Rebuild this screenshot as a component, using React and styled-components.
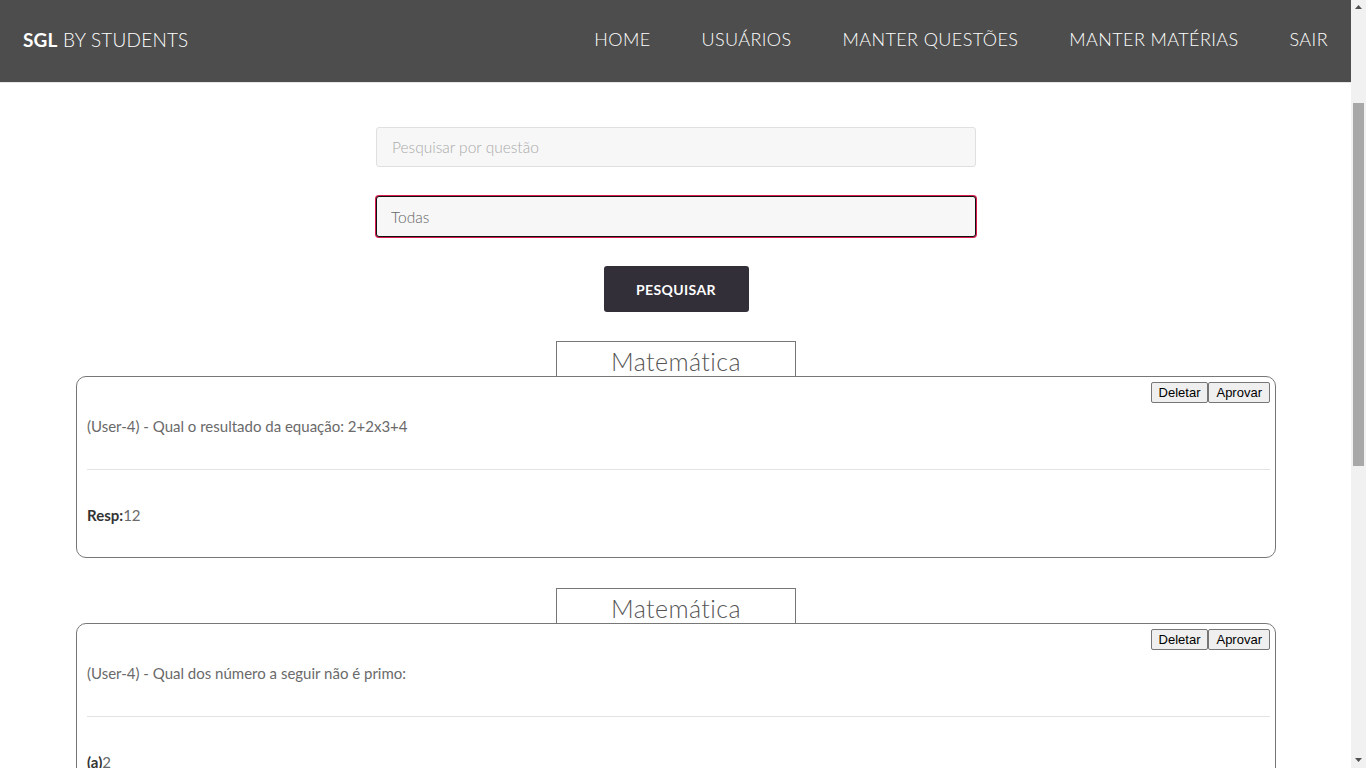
import React from "react";
import styled, { createGlobalStyle } from "styled-components";

const Global = createGlobalStyle`
  html, body { margin: 0; padding: 0; background: #fff; }
  body { font-family: "Lato", "Open Sans", sans-serif; color: #666; }
  * { box-sizing: border-box; }
`;

const Page = styled.div`
  margin-right: 15px;
`;

const ScrollTrack = styled.div`
  position: fixed;
  top: 0;
  right: 0;
  width: 15px;
  height: 100vh;
  background: #f1f1f1;
  display: flex;
  flex-direction: column;
  align-items: center;
  justify-content: space-between;
  padding: 5px 0 6px;
`;

const ScrollThumb = styled.div`
  position: absolute;
  left: 2px;
  top: 103px;
  width: 11px;
  height: 363px;
  background: #a8a8a8;
`;

const Arrow = styled.svg`
  display: block;
  width: 7px;
  height: 4px;
  fill: #505050;
`;

const Nav = styled.header`
  height: 83px;
  background: #4d4d4d;
  display: flex;
  align-items: center;
  justify-content: space-between;
  padding: 0 23px 4px 23px;
  border-bottom: 1px solid #e6e6e6;
`;

const Brand = styled.div`
  color: #fff;
  font-size: 19px;
  font-weight: 300;
  letter-spacing: 0.2px;
  b { font-weight: 700; }
`;

const Menu = styled.nav`
  display: flex;
  gap: 51px;
`;

const MenuLink = styled.a`
  color: #fff;
  font-size: 18px;
  font-weight: 300;
  letter-spacing: 0.4px;
  text-transform: uppercase;
  text-decoration: none;
`;

const Main = styled.main`
  display: flex;
  flex-direction: column;
  align-items: center;
  padding: 44px 75px 40px 76px;
`;

const SearchInput = styled.input`
  width: 600px;
  height: 40px;
  background: #f7f7f7;
  border: 1px solid #e0e0e0;
  border-radius: 3px;
  padding: 0 15px;
  font-family: inherit;
  font-size: 15.5px;
  font-weight: 300;
  color: #555;
  outline: none;
  &::placeholder { color: #aaa; }
`;

const Select = styled.select`
  appearance: none;
  margin-top: 29px;
  width: 600px;
  height: 41px;
  background: #f7f7f7;
  border: 1px solid #111;
  box-shadow: 0 0 0 1px #d81b4c;
  border-radius: 3px;
  padding: 0 14px;
  font-family: inherit;
  font-size: 15.5px;
  font-weight: 300;
  color: #666;
  outline: none;
`;

const SearchButton = styled.button`
  margin-top: 29px;
  width: 145px;
  height: 46px;
  background: #332f38;
  color: #fff;
  border: none;
  border-radius: 3px;
  font-family: inherit;
  font-weight: 700;
  font-size: 14px;
  letter-spacing: 0.4px;
`;

const Question = styled.section`
  width: 100%;
  display: flex;
  flex-direction: column;
  align-items: center;
  margin-top: ${(p) => (p.$first ? "29px" : "30px")};
`;

const SubjectTab = styled.div`
  width: 240px;
  height: 35px;
  border: 1px solid #777;
  border-bottom: none;
  text-align: center;
  font-size: 25px;
  font-weight: 300;
  color: #555;
  line-height: 38px;
  letter-spacing: 0.4px;
`;

const Card = styled.div`
  width: 1200px;
  border: 1px solid #777;
  border-radius: 10px;
  padding: 5px 5px 32px 10px;
`;

const Actions = styled.div`
  display: flex;
  justify-content: flex-end;
`;

const SmallButton = styled.button`
  font-family: "Liberation Sans", Arial, sans-serif;
  font-size: 13px;
  height: 21px;
  padding: 0 7px;
  margin: 0;
  background: #efefef;
  color: #000;
  border: 1px solid #767676;
  border-radius: 2px;
`;

const QuestionText = styled.p`
  margin: 13px 0 0 0;
  font-size: 15px;
  font-weight: 400;
  line-height: 20px;
  color: #6a6a6a;
`;

const Divider = styled.hr`
  margin: 33px 0 0 0;
  border: none;
  border-top: 1px solid #e3e3e3;
`;

const Line = styled.p`
  margin: ${(p) => (p.$tight ? "14px" : "35px")} 0 0 0;
  font-size: 15px;
  line-height: 20px;
  color: #6a6a6a;
  b { color: #333; font-weight: 700; }
`;

const questions = [
  {
    subject: "Matemática",
    text: "(User-4) - Qual o resultado da equação: 2+2x3+4",
    lines: [["Resp:", "12"]],
  },
  {
    subject: "Matemática",
    text: "(User-4) - Qual dos número a seguir não é primo:",
    lines: [
      ["(a)", "2"],
      ["(b)", "3"],
      ["(c)", "4"],
      ["(d)", "5"],
      ["Resp:", "4"],
    ],
  },
];

export default function App() {
  return (
    <>
      <Global />
      <Page>
        <Nav>
          <Brand>
            <b>SGL</b> BY STUDENTS
          </Brand>
          <Menu>
            <MenuLink href="#">Home</MenuLink>
            <MenuLink href="#">Usuários</MenuLink>
            <MenuLink href="#">Manter Questões</MenuLink>
            <MenuLink href="#">Manter Matérias</MenuLink>
            <MenuLink href="#">Sair</MenuLink>
          </Menu>
        </Nav>
        <Main>
          <SearchInput placeholder="Pesquisar por questão" />
          <Select defaultValue="Todas">
            <option>Todas</option>
            <option>Matemática</option>
          </Select>
          <SearchButton>PESQUISAR</SearchButton>
          {questions.map((q, i) => (
            <Question key={i} $first={i === 0}>
              <SubjectTab>{q.subject}</SubjectTab>
              <Card>
                <Actions>
                  <SmallButton>Deletar</SmallButton>
                  <SmallButton>Aprovar</SmallButton>
                </Actions>
                <QuestionText>{q.text}</QuestionText>
                <Divider />
                {q.lines.map(([k, v], j) => (
                  <Line key={j} $tight={j > 0}>
                    <b>{k}</b>
                    {v}
                  </Line>
                ))}
              </Card>
            </Question>
          ))}
        </Main>
      </Page>
      <ScrollTrack>
        <Arrow viewBox="0 0 7 4">
          <polygon points="3.5,0 7,4 0,4" />
        </Arrow>
        <ScrollThumb />
        <Arrow viewBox="0 0 7 4">
          <polygon points="0,0 7,0 3.5,4" />
        </Arrow>
      </ScrollTrack>
    </>
  );
}
